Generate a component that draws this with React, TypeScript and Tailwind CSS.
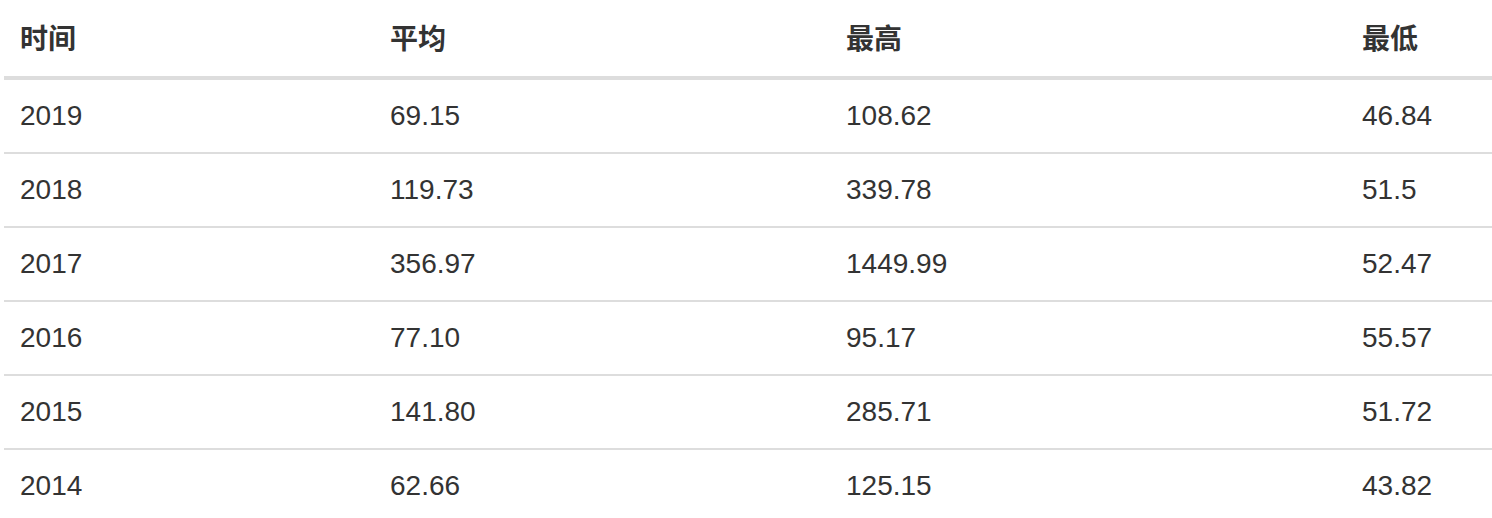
import React from "react";

const rows = [
  ["2019", "69.15", "108.62", "46.84"],
  ["2018", "119.73", "339.78", "51.5"],
  ["2017", "356.97", "1449.99", "52.47"],
  ["2016", "77.10", "95.17", "55.57"],
  ["2015", "141.80", "285.71", "51.72"],
  ["2014", "62.66", "125.15", "43.82"],
];

export default function App() {
  return (
    <div
      className="bg-white pt-[4px] pl-[4px] h-[518px] overflow-hidden text-[#333]"
      style={{ fontFamily: '"Liberation Sans", "Noto Sans CJK SC", Arial, sans-serif' }}
    >
      <table className="w-[1488px] table-fixed border-collapse text-[28px] leading-[40px]">
        <colgroup>
          <col className="w-[370px]" />
          <col className="w-[456px]" />
          <col className="w-[516px]" />
          <col className="w-[146px]" />
        </colgroup>
        <thead>
          <tr>
            {["时间", "平均", "最高", "最低"].map((h) => (
              <th
                key={h}
                className="text-left font-bold p-[16px] border-b-[4px] border-[#ddd] align-bottom"
              >
                {h}
              </th>
            ))}
          </tr>
        </thead>
        <tbody>
          {rows.map((r, i) => (
            <tr key={r[0]}>
              {r.map((c, j) => (
                <td
                  key={j}
                  className={`p-[16px] align-top ${i > 0 ? "border-t-[2px] border-[#ddd]" : ""}`}
                >
                  {c}
                </td>
              ))}
            </tr>
          ))}
        </tbody>
      </table>
    </div>
  );
}
